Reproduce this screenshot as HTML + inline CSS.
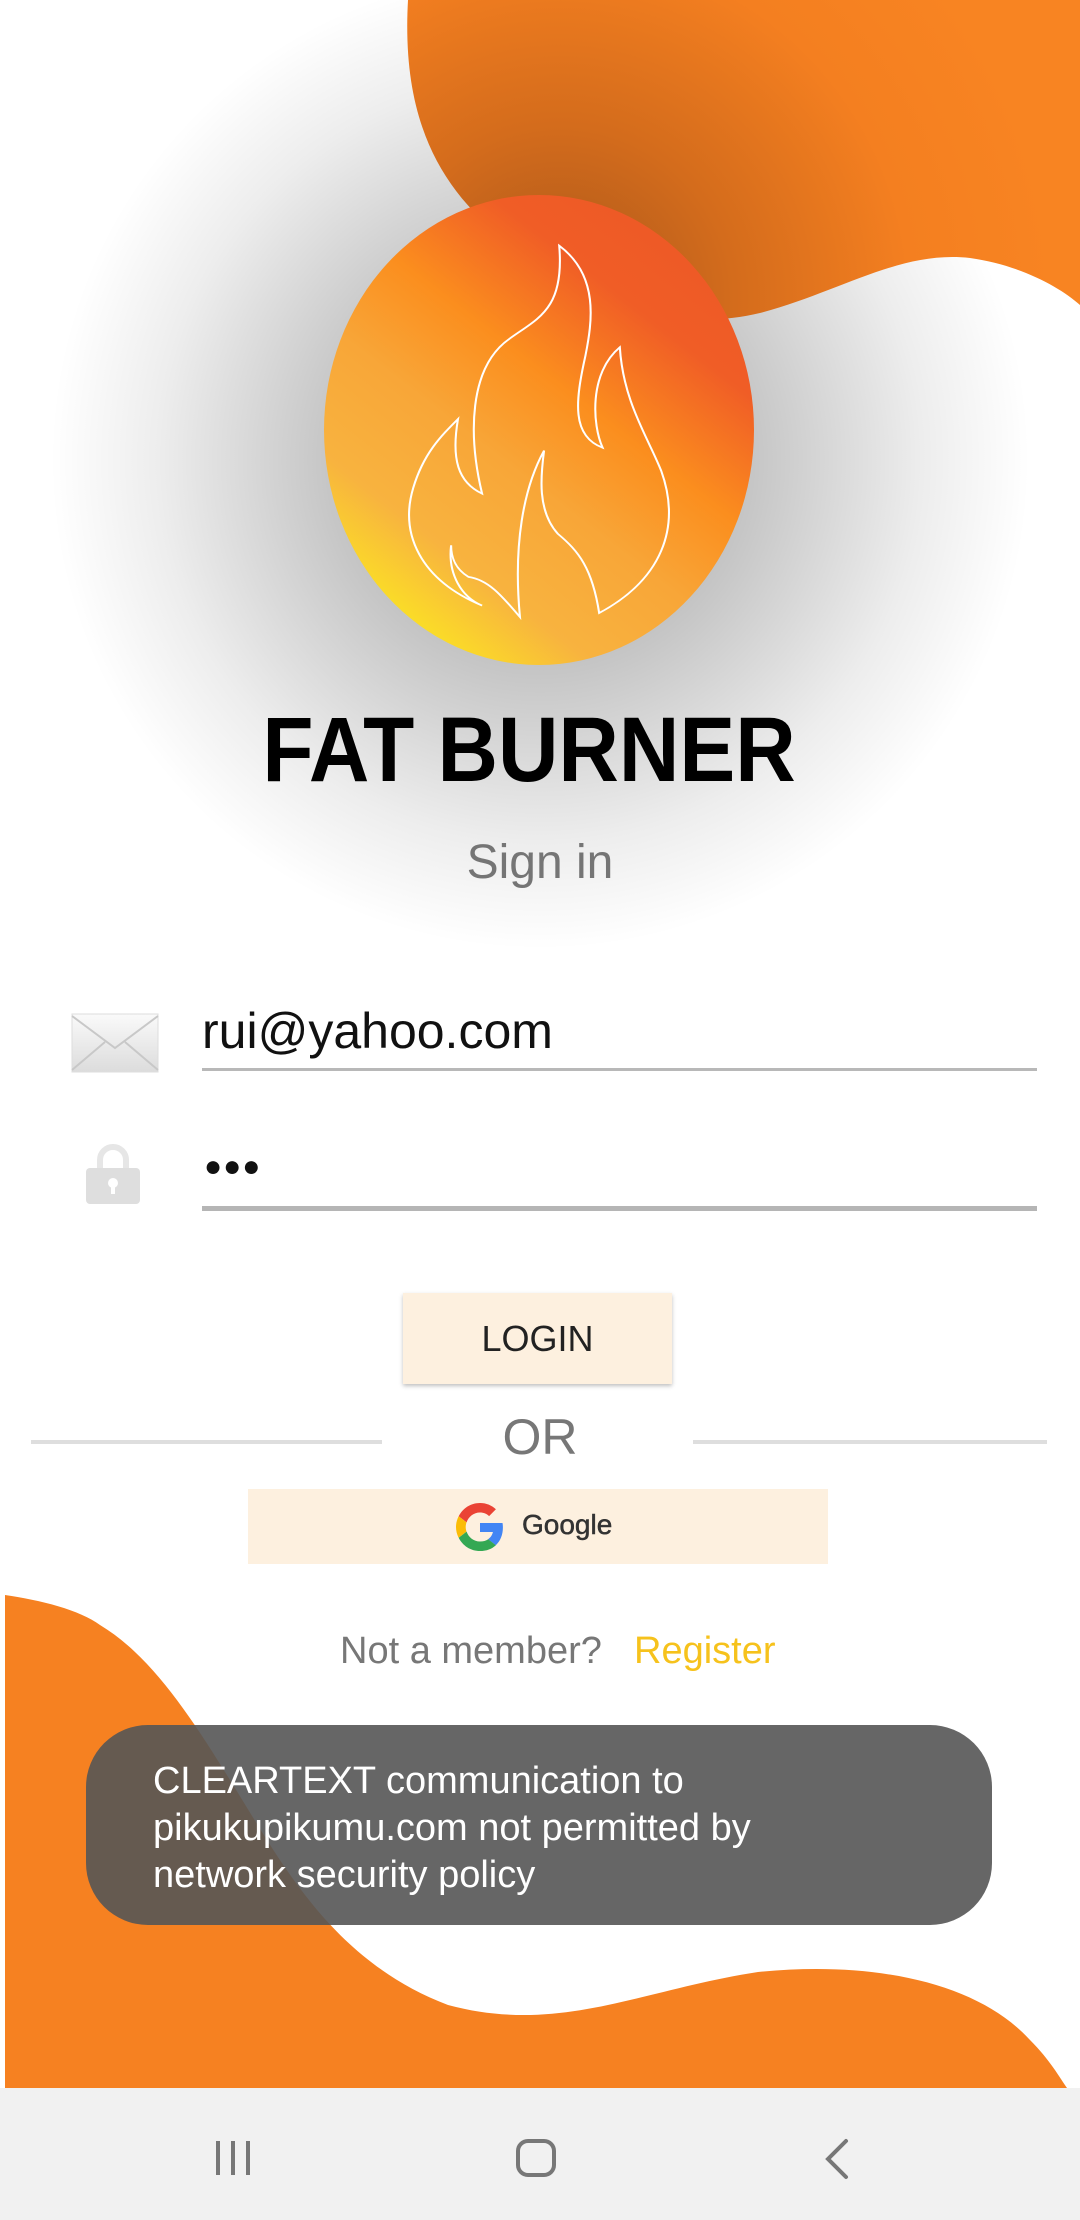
<!DOCTYPE html>
<html><head><meta charset="utf-8"><style>
*{margin:0;padding:0;box-sizing:border-box}
body{width:1080px;height:2220px;position:relative;overflow:hidden;background:#fff;font-family:"Liberation Sans",Roboto,sans-serif}
.abs{position:absolute}
</style></head><body>
<div class="abs" style="left:50px;top:-30px;width:980px;height:980px;border-radius:50%;background:radial-gradient(closest-side,rgba(0,0,0,0.24) 40%,rgba(0,0,0,0.07) 78%,rgba(0,0,0,0) 100%)"></div>
<svg class="abs" style="left:0;top:0" width="1080" height="2220" viewBox="0 0 1080 2220">
<defs>
<radialGradient id="tb" cx="560" cy="300" r="500" gradientUnits="userSpaceOnUse">
<stop offset="0" stop-color="#a8561a"/><stop offset="0.35" stop-color="#d46c1c"/><stop offset="0.7" stop-color="#f47f20"/><stop offset="1" stop-color="#f88422"/></radialGradient>
<linearGradient id="eg" x1="0.2" y1="0.95" x2="0.8" y2="0.1">
<stop offset="0" stop-color="#fbe622"/><stop offset="0.2" stop-color="#f8b33f"/><stop offset="0.42" stop-color="#f8a638"/><stop offset="0.62" stop-color="#fb8e1e"/><stop offset="0.85" stop-color="#f05d26"/><stop offset="1" stop-color="#ee5a26"/></linearGradient>
</defs>
<path d="M408 0 C400 142 455 218 560 275 C640 321 700 327 760 313 C840 292 900 250 970 258 C1020 265 1060 287 1080 305 L1080 0 Z" fill="url(#tb)"/>
<ellipse cx="539" cy="430" rx="215" ry="235" fill="url(#eg)"/>
<g transform="scale(0.6887,0.574)" fill="none" stroke="#fff" stroke-width="3">
<path d="M812,428 C870,480 860,560 850,620 C835,700 830,760 875,780 C860,740 855,650 900,605 C905,700 940,760 960,820 C990,920 960,1010 870,1068 C860,990 840,960 810,930 C780,890 785,830 790,785 C760,850 745,950 755,1075 C730,1040 710,1010 680,1005 C660,990 655,970 655,950 C650,1000 670,1040 700,1055 C610,1010 580,930 600,850 C615,790 640,760 665,730 C655,800 665,840 700,860 C680,760 680,640 740,590 C780,555 820,540 812,428 Z"/>
</g>
<path d="M5 1595 C40 1600 80 1610 100 1625 C150 1655 190 1715 230 1780 C280 1860 330 1960 448 2005 C560 2035 640 1990 758 1972 C880 1960 980 1985 1030 2040 C1050 2060 1060 2078 1067 2088 L5 2088 Z" fill="#f68121"/>
</svg>
<div class="abs" style="left:129px;top:700px;width:800px;text-align:center;font-weight:bold;font-size:92px;line-height:100px;color:#000;transform:scaleX(0.91);transform-origin:center;white-space:nowrap">FAT BURNER</div>
<div class="abs" style="left:0;width:1080px;top:835px;text-align:center;font-size:48px;color:#757575">Sign in</div>
<svg class="abs" style="left:71px;top:1012px" width="88" height="62" viewBox="0 0 88 62">
<defs><linearGradient id="env" x1="0" y1="0" x2="0" y2="1"><stop offset="0" stop-color="#fafafa"/><stop offset="1" stop-color="#dcdcdc"/></linearGradient></defs>
<rect x="1" y="2" width="86" height="58" fill="url(#env)" stroke="#ddd"/>
<path d="M1 4 L44 36 L87 4 M1 58 L34 30 M87 58 L54 30" stroke="#c8c8c8" stroke-width="2" fill="none"/>
</svg>
<div class="abs" style="left:202px;top:1002px;font-size:50px;color:#111">rui@yahoo.com</div>
<div class="abs" style="left:202px;top:1068px;width:835px;height:3px;background:#b8b8b8"></div>
<svg class="abs" style="left:84px;top:1140px" width="58" height="66" viewBox="0 0 58 66">
<path d="M16 30 V20 a13 13 0 0 1 26 0 V30" stroke="#e6e6e6" stroke-width="6" fill="none"/>
<rect x="2" y="28" width="54" height="36" rx="4" fill="#dedede"/>
<circle cx="29" cy="43" r="5" fill="#fff"/><rect x="27" y="44" width="4" height="10" fill="#fff"/>
</svg>
<div class="abs" style="left:204px;top:1150px;font-size:30px;color:#111;letter-spacing:1px">●●●</div>
<div class="abs" style="left:202px;top:1206px;width:835px;height:5px;background:#b5b5b5"></div>
<div class="abs" style="left:403px;top:1293px;width:269px;height:91px;background:#fdf0df;box-shadow:0 2px 4px rgba(0,0,0,0.25);text-align:center;line-height:91px;font-size:36px;color:#222">LOGIN</div>
<div class="abs" style="left:31px;top:1440px;width:351px;height:4px;background:#dedede"></div>
<div class="abs" style="left:693px;top:1440px;width:354px;height:4px;background:#dedede"></div>
<div class="abs" style="left:0;width:1080px;top:1408px;text-align:center;font-size:50px;color:#777">OR</div>
<div class="abs" style="left:248px;top:1489px;width:580px;height:75px;background:#fdf0df"></div>
<svg class="abs" style="left:456px;top:1503px" width="48" height="48" viewBox="0 0 48 48">
<path fill="#EA4335" d="M24 9.5c3.5 0 6.6 1.2 9.1 3.6l6.8-6.8C35.8 2.4 30.3 0 24 0 14.6 0 6.6 5.4 2.7 13.3l7.9 6.1C12.5 13.6 17.8 9.5 24 9.5z"/>
<path fill="#4285F4" d="M46.9 24.5c0-1.6-.1-3.1-.4-4.5H24v9h12.9c-.6 3-2.3 5.5-4.8 7.2l7.7 6c4.5-4.2 7.1-10.3 7.1-17.7z"/>
<path fill="#FBBC05" d="M10.5 28.6c-.5-1.4-.8-3-.8-4.6s.3-3.2.8-4.6l-7.9-6.1C1 16.6 0 20.2 0 24s.9 7.4 2.6 10.7l7.9-6.1z"/>
<path fill="#34A853" d="M24 48c6.5 0 11.9-2.1 15.9-5.8l-7.7-6c-2.2 1.5-5 2.3-8.2 2.3-6.2 0-11.5-4.2-13.4-9.9l-7.9 6.1C6.6 42.6 14.6 48 24 48z"/>
</svg>
<div class="abs" style="left:522px;top:1509px;font-size:28px;color:#333;-webkit-text-stroke:0.5px #333">Google</div>
<div class="abs" style="left:340px;top:1630px;font-size:38px;color:#777">Not a member?</div>
<div class="abs" style="left:634px;top:1630px;font-size:38px;color:#f6c21c">Register</div>
<div class="abs" style="left:86px;top:1725px;width:906px;height:200px;border-radius:62px;background:rgba(85,85,85,0.9);color:#fff;font-size:38px;line-height:47px;padding:33px 0 0 67px">CLEARTEXT communication to<br>pikukupikumu.com not permitted by<br>network security policy</div>
<div class="abs" style="left:0;top:2088px;width:1080px;height:132px;background:#f1f1f1"></div>
<div class="abs" style="left:216px;top:2141px;width:4px;height:34px;background:#777"></div>
<div class="abs" style="left:231px;top:2141px;width:4px;height:34px;background:#777"></div>
<div class="abs" style="left:246px;top:2141px;width:4px;height:34px;background:#777"></div>
<div class="abs" style="left:516px;top:2139px;width:40px;height:38px;border:4px solid #777;border-radius:12px"></div>
<svg class="abs" style="left:822px;top:2138px" width="30" height="42" viewBox="0 0 30 42"><path d="M24 3 L6 21 L24 39" stroke="#777" stroke-width="4" fill="none" stroke-linecap="round"/></svg>
</body></html>
